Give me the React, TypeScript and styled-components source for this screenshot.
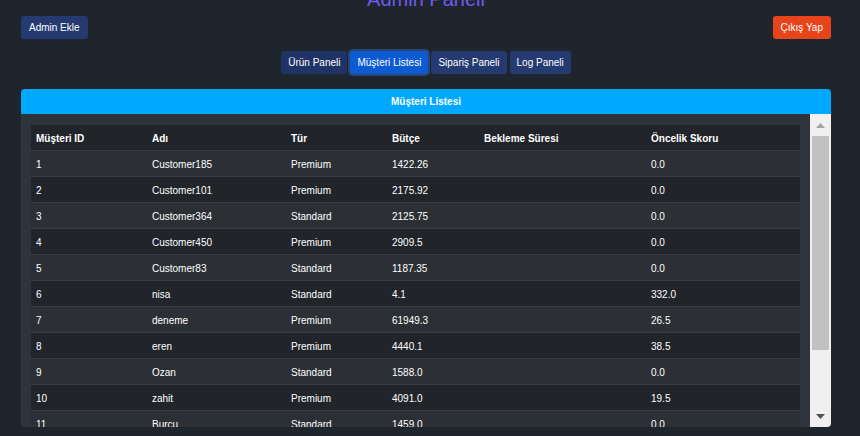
import React from 'react';
import styled, { createGlobalStyle } from 'styled-components';

const GlobalStyle = createGlobalStyle`
  html, body {
    margin: 0;
    padding: 0;
    background: #1f252d;
    font-family: "Liberation Sans", Arial, sans-serif;
    overflow: hidden;
  }
`

const Page = styled.div`
  width: 860px;
  height: 436px;
  padding: 0 29px 0 21px;
  box-sizing: border-box;
  display: flex;
  flex-direction: column;
`

const Title = styled.h1`
  margin: -13px 0 0;
  height: 24px;
  line-height: 24px;
  font-size: 20px;
  font-weight: normal;
  color: #6c5cf0;
  text-align: center;
`

const TopBar = styled.div`
  display: flex;
  justify-content: space-between;
  margin-top: 5px;
`

const Button = styled.button<{ $tone?: 'navy' | 'dark' | 'active' | 'danger'; $pad?: number }>`
  height: 23px;
  padding: 0 ${p => p.$pad ?? 8}px;
  border: none;
  border-radius: 3px;
  font-family: "Liberation Sans", Arial, sans-serif;
  font-size: 10px;
  color: #fff;
  cursor: pointer;
  background: ${p =>
    p.$tone === 'danger' ? '#e8441c'
      : p.$tone === 'active' ? '#0c5bd2'
      : p.$tone === 'dark' ? '#1f3366'
      : '#243a71'};
  box-shadow: ${p => (p.$tone === 'active' ? '0 0 0 2px #2a4670' : 'none')};
`

const Tabs = styled.div`
  display: flex;
  justify-content: center;
  gap: 3px;
  margin-top: 12px;
`

const Card = styled.div`
  margin-top: 15px;
  height: 338px;
  border-radius: 4px;
  overflow: hidden;
  background: #2e343c;
  display: flex;
  flex-direction: column;
`

const CardHeader = styled.div`
  height: 25px;
  line-height: 25px;
  background: #00a8ff;
  color: #fff;
  font-size: 10px;
  font-weight: bold;
  text-align: center;
`

const CardBody = styled.div`
  flex: 1;
  display: flex;
  min-height: 0;
`

const TableArea = styled.div`
  flex: 1;
  padding: 11px 10px 0;
  overflow: hidden;
`

const Table = styled.table`
  width: 769px;
  border-collapse: collapse;
  table-layout: fixed;
  color: #fff;
  font-size: 10px;
`

const Th = styled.th`
  height: 24px;
  padding: 1px 5px 0;
  text-align: left;
  font-weight: bold;
  background: #212429;
`

const Row = styled.tr<{ $odd: boolean }>`
  background: ${p => (p.$odd ? '#2c3035' : '#212429')};
  border-top: 1px solid #3a3e44;
`

const Td = styled.td`
  height: 24px;
  padding: 1px 5px 0;
  white-space: nowrap;
`

const ScrollTrack = styled.div`
  width: 21px;
  background: #f0f0f0;
  display: flex;
  flex-direction: column;
`

const ArrowBox = styled.div`
  height: 22px;
  display: flex;
  align-items: center;
  justify-content: center;
`

const Thumb = styled.div`
  height: 214px;
  margin: 0 2px;
  background: #c1c1c1;
`

const Spacer = styled.div`
  flex: 1;
`

const columns = [
  { label: 'Müşteri ID', width: 116 },
  { label: 'Adı', width: 139 },
  { label: 'Tür', width: 101 },
  { label: 'Bütçe', width: 92 },
  { label: 'Bekleme Süresi', width: 167 },
  { label: 'Öncelik Skoru', width: 154 },
]

const customers = [
  ['1', 'Customer185', 'Premium', '1422.26', '', '0.0'],
  ['2', 'Customer101', 'Premium', '2175.92', '', '0.0'],
  ['3', 'Customer364', 'Standard', '2125.75', '', '0.0'],
  ['4', 'Customer450', 'Premium', '2909.5', '', '0.0'],
  ['5', 'Customer83', 'Standard', '1187.35', '', '0.0'],
  ['6', 'nisa', 'Standard', '4.1', '', '332.0'],
  ['7', 'deneme', 'Premium', '61949.3', '', '26.5'],
  ['8', 'eren', 'Premium', '4440.1', '', '38.5'],
  ['9', 'Ozan', 'Standard', '1588.0', '', '0.0'],
  ['10', 'zahit', 'Premium', '4091.0', '', '19.5'],
  ['11', 'Burcu', 'Standard', '1459.0', '', '0.0'],
  ['12', 'Customer27', 'Standard', '980.4', '', '0.0'],
]

const Arrow = ({ up, color }: { up?: boolean; color: string }) => (
  <svg width="9" height="5" viewBox="0 0 9 5">
    <polygon points={up ? '4.5,0 9,5 0,5' : '0,0 9,0 4.5,5'} fill={color} />
  </svg>
)

const App: React.FC = () => {
  return (
    <>
      <GlobalStyle />
      <Page>
        <Title>Admin Paneli</Title>
        <TopBar>
          <Button $tone="navy">Admin Ekle</Button>
          <Button $tone="danger">Çıkış Yap</Button>
        </TopBar>
        <Tabs>
          <Button $tone="dark" $pad={7}>Ürün Paneli</Button>
          <Button $tone="active" $pad={7}>Müşteri Listesi</Button>
          <Button $tone="navy" $pad={7}>Sipariş Paneli</Button>
          <Button $tone="navy" $pad={7}>Log Paneli</Button>
        </Tabs>
        <Card>
          <CardHeader>Müşteri Listesi</CardHeader>
          <CardBody>
            <TableArea>
              <Table>
                <colgroup>
                  {columns.map(col => (
                    <col key={col.label} style={{ width: col.width }} />
                  ))}
                </colgroup>
                <thead>
                  <tr>
                    {columns.map(col => (
                      <Th key={col.label}>{col.label}</Th>
                    ))}
                  </tr>
                </thead>
                <tbody>
                  {customers.map((row, i) => (
                    <Row key={row[0]} $odd={i % 2 === 0}>
                      {row.map((cell, j) => (
                        <Td key={j}>{cell}</Td>
                      ))}
                    </Row>
                  ))}
                </tbody>
              </Table>
            </TableArea>
            <ScrollTrack>
              <ArrowBox>
                <Arrow up color="#a3a3a3" />
              </ArrowBox>
              <Thumb />
              <Spacer />
              <ArrowBox>
                <Arrow color="#505050" />
              </ArrowBox>
            </ScrollTrack>
          </CardBody>
        </Card>
      </Page>
    </>
  )
}

export default App
